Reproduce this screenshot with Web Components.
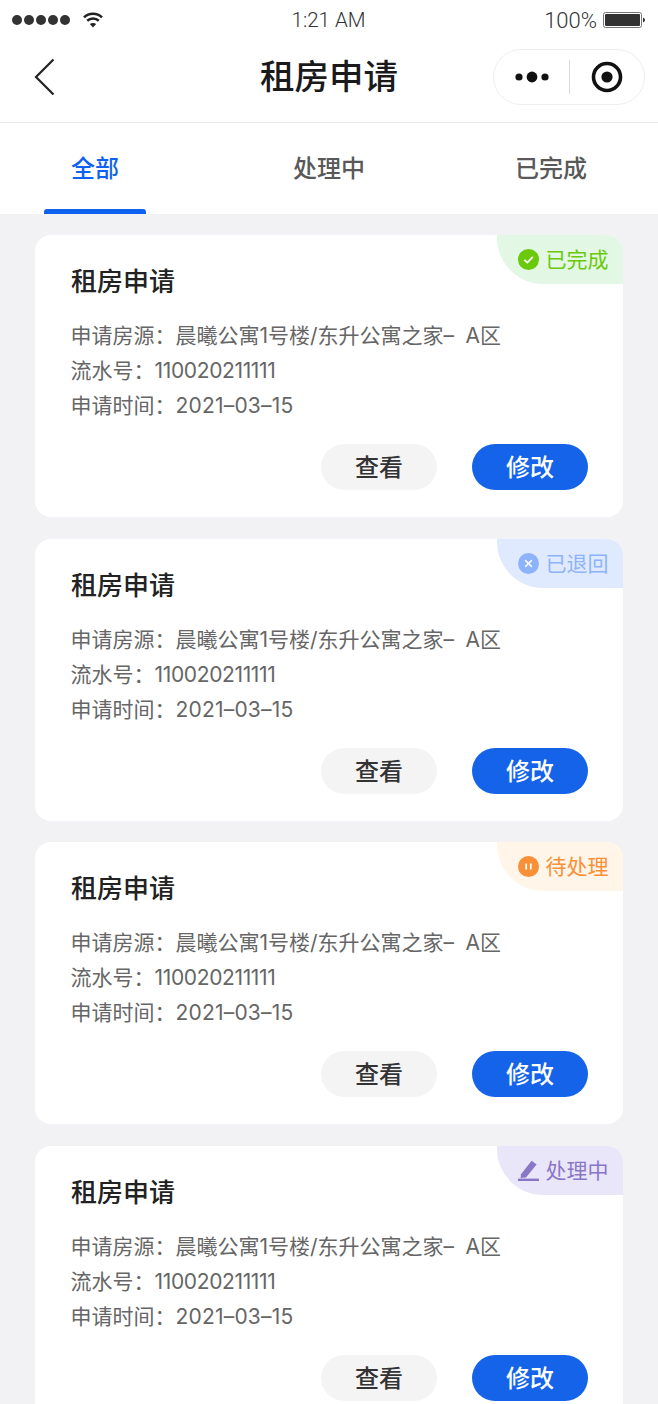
<!DOCTYPE html>
<html lang="zh-CN">
<head>
<meta charset="utf-8">
<title>租房申请</title>
<style>
  html, body { margin: 0; height: 1404px; overflow: hidden; background: #f2f2f5; }
  body { font-family: Inter, "Noto Sans CJK SC", sans-serif; }
</style>
</head>
<body>
<status-bar></status-bar>
<nav-bar>租房申请</nav-bar>
<tab-bar>
  <tab-item active>全部</tab-item>
  <tab-item style="margin-left:132px">处理中</tab-item>
  <tab-item style="margin-left:120px">已完成</tab-item>
</tab-bar>
<card-list>
  <apply-card status="done"></apply-card>
  <apply-card status="back"></apply-card>
  <apply-card status="wait"></apply-card>
  <apply-card status="doing"></apply-card>
</card-list>

<script>
// Barra de estado del teléfono
class StatusBar extends HTMLElement {
  constructor() {
    super();
    this.attachShadow({ mode: "open" });
    this.shadowRoot.innerHTML = `<style>
      :host { display: grid; grid-template-columns: minmax(0,1fr) auto minmax(0,1fr); align-items: center; height: 40px; padding: 0 13px 0 12px;
        background: #fff; font: 300 20.5px Roboto, sans-serif; color: #333; }
      .left { display: flex; align-items: center; }
      .dots { display: flex; gap: 2px; margin-right: 13px; }
      .dots i { width: 10px; height: 10px; border-radius: 50%; background: #333; }
      .right { display: flex; align-items: center; justify-content: flex-end; gap: 6px; font-size: 22px; }
      svg { display: block; }
    </style>
    <div class="left">
      <div class="dots"><i></i><i></i><i></i><i></i><i></i></div>
      <svg width="20" height="16" viewBox="0 0 20 16" fill="none" stroke="#222" stroke-width="2.6">
        <path d="M1 5.4C6 .6 14 .6 19 5.4"/>
        <path d="M4.2 8.8C7.4 5.8 12.6 5.8 15.8 8.8"/>
        <path d="M6.8 12 10 15.6 13.2 12C11.4 10.6 8.6 10.6 6.8 12Z" fill="#222" stroke="none"/>
      </svg>
    </div>
    <div>1:21 AM</div>
    <div class="right">
      <span>100%</span>
      <svg width="42" height="16" viewBox="0 0 42 16">
        <rect x=".5" y=".5" width="38" height="15" rx="2" fill="none" stroke="#777"/>
        <rect x="2" y="2" width="35" height="12" rx="1" fill="#333"/>
        <path d="M40 5.5C41.2 6 42 7 42 8S41.2 10 40 10.5Z" fill="#333"/>
      </svg>
    </div>`;
  }
}
customElements.define("status-bar", StatusBar);

// Cabecera con volver, título y cápsula
class NavBar extends HTMLElement {
  constructor() {
    super();
    this.attachShadow({ mode: "open" });
    this.shadowRoot.innerHTML = `<style>
      :host { display: grid; grid-template-columns: minmax(0,1fr) auto minmax(0,1fr); align-items: center; height: 82px; padding: 0 13px 0 34px;
        background: #fff; border-bottom: 1px solid #eaeaea; }
      .title { font: 500 34.5px "Noto Sans CJK SC", sans-serif; color: #1a1a1a; line-height: 46px; margin: -14px 0 0 -21px; }
      .back { display: block; margin-top: -8px; }
      .capsule { justify-self: end; display: flex; align-items: center; width: 152px; height: 56px; box-sizing: border-box;
        margin-top: -8px; border: 1px solid #eeeeee; border-radius: 28px; background: #fff; }
      .capsule div { flex: 1; display: flex; justify-content: center; }
      .capsule div:first-child svg { margin-left: 2px; }
      .line { width: 1px; height: 34px; background: #d8d8d8; flex: none; }
    </style>
    <svg class="back" width="22" height="38" viewBox="0 0 22 38" fill="none" stroke="#222" stroke-width="2.2">
      <path d="M19.5 1.5 2 19 19.5 36.5"/>
    </svg>
    <div class="title"><slot></slot></div>
    <div class="capsule">
      <div><svg width="34" height="12" viewBox="0 0 34 12" fill="#111"><circle cx="4" cy="6" r="3.6"/><circle cx="17" cy="6" r="5.4"/><circle cx="30" cy="6" r="3.6"/></svg></div>
      <span class="line"></span>
      <div><svg width="32" height="32" viewBox="0 0 32 32"><circle cx="16" cy="16" r="13.5" fill="none" stroke="#111" stroke-width="3.6"/><circle cx="16" cy="16" r="5.6" fill="#111"/></svg></div>
    </div>`;
  }
}
customElements.define("nav-bar", NavBar);

class TabBar extends HTMLElement {
  constructor() {
    super();
    this.attachShadow({ mode: "open" });
    this.shadowRoot.innerHTML = `<style>
      :host { display: flex; height: 91px; padding-left: 44px; background: #fff; }
    </style><slot></slot>`;
  }
}
customElements.define("tab-bar", TabBar);

class TabItem extends HTMLElement {
  constructor() {
    super();
    this.attachShadow({ mode: "open" });
    this.shadowRoot.innerHTML = `<style>
      :host { display: flex; flex-direction: column; align-items: center; width: 102px;
        font: 500 24px "Noto Sans CJK SC", sans-serif; color: #595959; }
      :host([active]) { color: #0f62f0; }
      .txt { line-height: 34px; margin-top: 26.5px; }
      .bar { margin-top: auto; width: 100%; height: 5px; border-radius: 3px 3px 0 0; }
      :host([active]) .bar { background: #0f62f0; }
    </style><div class="txt"><slot></slot></div><div class="bar"></div>`;
  }
}
customElements.define("tab-item", TabItem);

class CardList extends HTMLElement {
  constructor() {
    super();
    this.attachShadow({ mode: "open" });
    this.shadowRoot.innerHTML = `<style>
      :host { display: flex; flex-direction: column; gap: 21.6px; padding: 21px 35px 0; }
    </style><slot></slot>`;
  }
}
customElements.define("card-list", CardList);

// Etiqueta de estado en la esquina de la tarjeta
const STATUS = {
  done: { text: "已完成", fg: "#69c90a", bg: "#e3f8e4",
    icon: `<circle cx="10.5" cy="10.5" r="10.5" fill="#69c90a"/><path d="M6.3 10.8 9.4 13.6 14.8 7.8" fill="none" stroke="#fff" stroke-width="1.8"/>` },
  back: { text: "已退回", fg: "#8db4fa", bg: "#e0eafe",
    icon: `<circle cx="10.5" cy="10.5" r="10.5" fill="#8db4fa"/><path d="M7.2 7.2 13.8 13.8M13.8 7.2 7.2 13.8" stroke="#fff" stroke-width="1.6"/>` },
  wait: { text: "待处理", fg: "#f98f36", bg: "#fff5e9",
    icon: `<circle cx="10.5" cy="10.5" r="10.5" fill="#f98f36"/><path d="M8.2 7.4V13.6M12.8 7.4V13.6" stroke="#fff" stroke-width="1.7"/>` },
  doing: { text: "处理中", fg: "#8a76c6", bg: "#e9e6f9",
    icon: `<path d="M3 14.2 13.6 .8 18.6 4.6 8 17.6 2.6 18Z" fill="#8a76c6"/><rect y="18.6" width="21" height="2.4" fill="#8a76c6"/>` }
};

class StatusTag extends HTMLElement {
  constructor() {
    super();
    this.attachShadow({ mode: "open" });
    const s = STATUS[this.getAttribute("status")];
    this.shadowRoot.innerHTML = `<style>
      :host { position: absolute; top: 0; right: 0; display: flex; align-items: center; justify-content: flex-end; gap: 7px;
        box-sizing: border-box; width: 126px; height: 49px; padding: 0 14.5px 0 0;
        border-radius: 0 16px 0 46px; background: ${s.bg}; color: ${s.fg};
        font: 400 21px "Noto Sans CJK SC", sans-serif; }
      svg { display: block; }
      span { margin-top: -3px; }
    </style>
    <svg width="21" height="21" viewBox="0 0 21 21">${s.icon}</svg><span>${s.text}</span>`;
  }
}
customElements.define("status-tag", StatusTag);

class PillButton extends HTMLElement {
  constructor() {
    super();
    this.attachShadow({ mode: "open" });
    this.shadowRoot.innerHTML = `<style>
      :host { display: flex; align-items: center; justify-content: center; width: 116px; height: 46px; box-sizing: border-box; padding-bottom: 3px; border-radius: 23px;
        background: #f4f4f4; color: #333; font: 500 24px "Noto Sans CJK SC", sans-serif; }
      :host([primary]) { background: #1463e8; color: #fff; }
    </style><slot></slot>`;
  }
}
customElements.define("pill-button", PillButton);

class ApplyCard extends HTMLElement {
  constructor() {
    super();
    this.attachShadow({ mode: "open" });
    const status = this.getAttribute("status");
    this.shadowRoot.innerHTML = `<style>
      :host { display: block; position: relative; height: 282px; box-sizing: border-box; padding: 27px 35px 0 36px;
        background: #fff; border-radius: 16px; flex: none; }
      h2 { margin: 0; font: 500 26px/36px "Noto Sans CJK SC", sans-serif; color: #222; }
      .info { margin: 20px 0 0 -.5px; font: 400 21px/35px Inter, "Noto Sans CJK SC", sans-serif; color: #666; white-space: nowrap; word-spacing: 5.5px; }
      .num { letter-spacing: -.35px; }
      .date { letter-spacing: .2px; }
      .btns { display: flex; justify-content: flex-end; gap: 35px; margin-top: 21px; }
    </style>
    <status-tag status="${status}"></status-tag>
    <h2>租房申请</h2>
    <div class="info">
      <div>申请房源：晨曦公寓1号楼/东升公寓之家– A区</div>
      <div>流水号：<span class="num">110020211111</span></div>
      <div>申请时间：<span class="date">2021–03–15</span></div>
    </div>
    <div class="btns">
      <pill-button>查看</pill-button>
      <pill-button primary>修改</pill-button>
    </div>`;
  }
}
customElements.define("apply-card", ApplyCard);
</script>
</body>
</html>
